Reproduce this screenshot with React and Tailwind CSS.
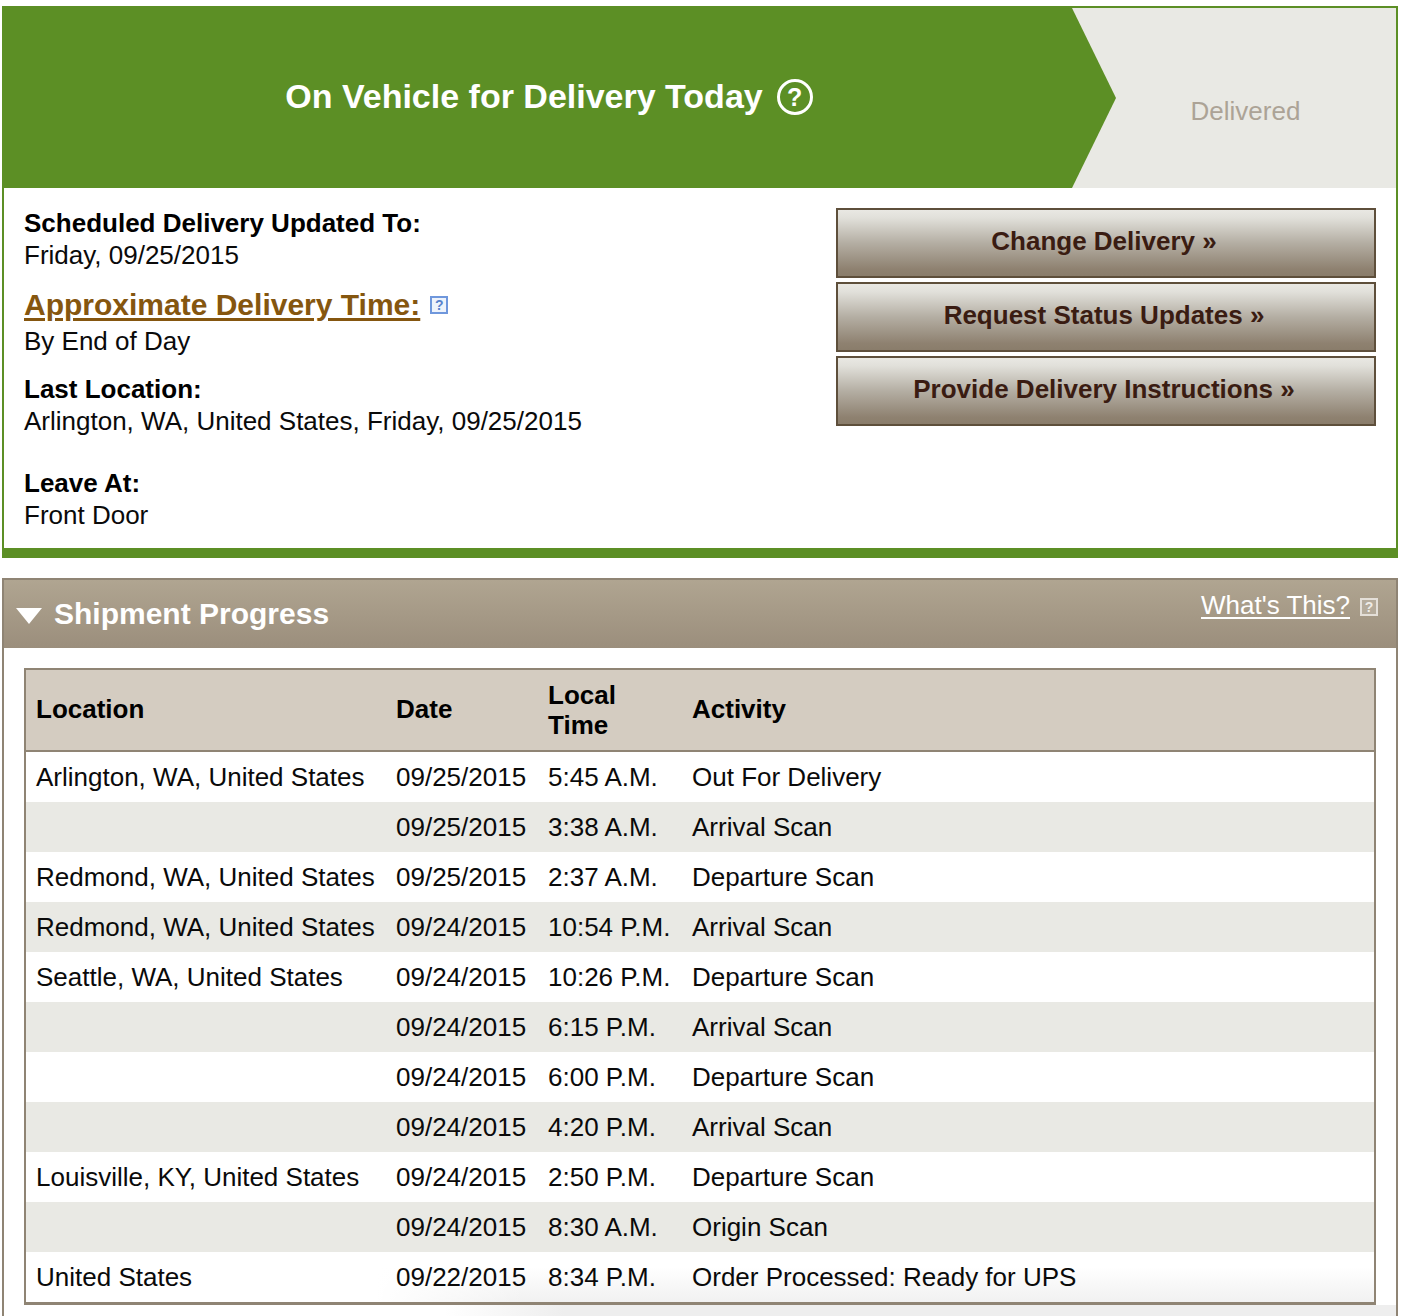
const rows = [
  ["Arlington, WA, United States", "09/25/2015", "5:45 A.M.", "Out For Delivery"],
  ["", "09/25/2015", "3:38 A.M.", "Arrival Scan"],
  ["Redmond, WA, United States", "09/25/2015", "2:37 A.M.", "Departure Scan"],
  ["Redmond, WA, United States", "09/24/2015", "10:54 P.M.", "Arrival Scan"],
  ["Seattle, WA, United States", "09/24/2015", "10:26 P.M.", "Departure Scan"],
  ["", "09/24/2015", "6:15 P.M.", "Arrival Scan"],
  ["", "09/24/2015", "6:00 P.M.", "Departure Scan"],
  ["", "09/24/2015", "4:20 P.M.", "Arrival Scan"],
  ["Louisville, KY, United States", "09/24/2015", "2:50 P.M.", "Departure Scan"],
  ["", "09/24/2015", "8:30 A.M.", "Origin Scan"],
  ["United States", "09/22/2015", "8:34 P.M.", "Order Processed: Ready for UPS"],
];

function Btn({ children }) {
  return (
    <a className="flex h-[70px] w-[540px] items-center justify-center border-2 border-[#5e4f3b] bg-[linear-gradient(#e9e8e3_0%,#e1e0da_12%,#b4aea3_50%,#8e8170_90%,#8a7d6b_100%)] pb-[4px] pr-[4px] text-[26px] font-bold text-[#3a1c12]">
      {children}
    </a>
  );
}

function Label({ children }) {
  return <div className="font-bold text-black">{children}</div>;
}

export default function App() {
  return (
    <div className="h-[1316px] overflow-hidden bg-white pl-[2px] pr-[12px] pt-[6px] font-['Liberation_Sans',Arial,sans-serif] text-[26px] leading-[32px] text-[#0a0a0a]">
      <section className="border-x-2 border-t-2 border-b-[10px] border-[#5c8f25]">
        <div className="relative flex h-[180px] bg-[#e9e9e4]">
          <div className="flex h-full w-[1112px] items-center justify-center gap-[14px] bg-[#5c8f25] pr-[22px] [clip-path:polygon(0_0,1068px_0,1112px_90px,1068px_180px,0_180px)]">
            <span className="mb-[4px] text-[34px] font-bold leading-[40px] text-white">On Vehicle for Delivery Today</span>
            <span className="mb-[2px] flex h-[36px] w-[36px] items-center justify-center rounded-full border-[3px] border-white text-[25px] font-bold leading-none text-white">?</span>
          </div>
          <div className="flex flex-1 items-center justify-center pr-[21px] pt-[26px] text-[#aca396]">Delivered</div>
        </div>
        <div className="flex h-[360px] justify-between pl-[20px] pr-[20px] pt-[19px]">
          <div>
            <Label>Scheduled Delivery Updated To:</Label>
            <div>Friday, 09/25/2015</div>
            <div className="mb-[2px] mt-[15px] flex items-center gap-[10px] leading-[37px]">
              <a className="text-[30px] font-bold text-[#85560f] underline underline-offset-[3px]">Approximate Delivery Time:</a>
              <span className="flex h-[18px] w-[18px] items-center justify-center border-2 border-[#6f97dc] bg-[#eef3fb] text-[14px] font-bold leading-none text-[#5a83cc]">?</span>
            </div>
            <div>By End of Day</div>
            <div className="mt-[16px]"><Label>Last Location:</Label></div>
            <div>Arlington, WA, United States, Friday, 09/25/2015</div>
            <div className="mt-[30px]"><Label>Leave At:</Label></div>
            <div>Front Door</div>
          </div>
          <div className="flex flex-col gap-[4px] pt-[1px]">
            <Btn>Change Delivery »</Btn>
            <Btn>Request Status Updates »</Btn>
            <Btn>Provide Delivery Instructions »</Btn>
          </div>
        </div>
      </section>

      <section className="relative mt-[20px] h-[760px] border-x-2 border-t-2 border-[#8f8474]">
        <div className="flex h-[68px] items-start justify-between bg-[linear-gradient(#b0a591,#9b8e7c)]">
          <div className="flex items-center gap-[12px] pl-[12px] pt-[16px]">
            <svg width="26" height="16" viewBox="0 0 26 16" className="mt-[4px]">
              <polygon points="0,0 26,0 13,16" fill="#fff" />
            </svg>
            <span className="text-[30px] font-bold leading-[36px] text-white">Shipment Progress</span>
          </div>
          <div className="flex items-center gap-[10px] pr-[18px] pt-[9px]">
            <a className="leading-[32px] text-white underline underline-offset-[3px]">What's This?</a>
            <span className="mt-[4px] flex h-[18px] w-[18px] items-center justify-center border-2 border-[#e4dfd8] bg-[#b5ab9b] text-[14px] font-bold leading-none text-[#efece7]">?</span>
          </div>
        </div>
        <div className="pt-[20px]">
          <div className="mx-[20px] border-2 border-b-[3px] border-[#8f8474]">
            <table className="w-full table-fixed border-separate border-spacing-0 text-left">
              <thead>
                <tr className="h-[82px] bg-[#d4ccc1] font-bold text-black">
                  <th className="w-[360px] border-b-2 border-[#8f8474] pb-[2px] pl-[10px] font-bold">Location</th>
                  <th className="w-[152px] border-b-2 border-[#8f8474] pb-[2px] pl-[10px] font-bold">Date</th>
                  <th className="w-[144px] border-b-2 border-[#8f8474] pl-[10px] font-bold leading-[30px]">Local<br />Time</th>
                  <th className="border-b-2 border-[#8f8474] pb-[2px] pl-[10px] font-bold">Activity</th>
                </tr>
              </thead>
              <tbody>
                {rows.map((r, i) => (
                  <tr
                    key={i}
                    className={
                      i === rows.length - 1
                        ? "h-[50px] bg-[linear-gradient(90deg,#fff_350px,transparent_500px),linear-gradient(#fff_30%,#f1f1f1)]"
                        : i % 2
                          ? "h-[50px] bg-[#e9e9e4]"
                          : "h-[50px] bg-white"
                    }
                  >
                    {r.map((c, j) => (
                      <td key={j} className="whitespace-nowrap pl-[10px]">{c}</td>
                    ))}
                  </tr>
                ))}
              </tbody>
            </table>
          </div>
          <div className="h-[14px] bg-[linear-gradient(90deg,#fff_440px,#eeeeee_560px)]"></div>
        </div>
      </section>
    </div>
  );
}
